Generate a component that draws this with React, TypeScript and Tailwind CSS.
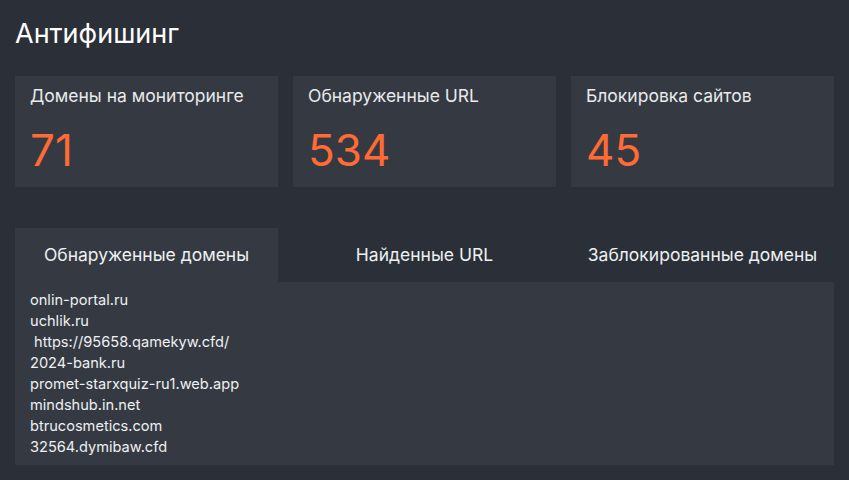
import { useState } from 'react';

const stats = [
  { label: 'Домены на мониторинге', value: '71' },
  { label: 'Обнаруженные URL', value: '534' },
  { label: 'Блокировка сайтов', value: '45' },
];

const tabs = ['Обнаруженные домены', 'Найденные URL', 'Заблокированные домены'];

const domains = [
  'onlin-portal.ru',
  'uchlik.ru',
  '\u00a0https://95658.qamekyw.cfd/',
  '2024-bank.ru',
  'promet-starxquiz-ru1.web.app',
  'mindshub.in.net',
  'btrucosmetics.com',
  '32564.dymibaw.cfd',
];

export default function App() {
  const [active, setActive] = useState(0);

  return (
    <div className="min-h-[480px] bg-[#2b3038] px-[15px] pt-[19px] pb-[15px] font-['Inter',sans-serif] text-[#eef0f2]">
      <h1 className="text-[27px] leading-[30px] font-normal text-white">Антифишинг</h1>

      <div className="mt-[27px] grid grid-cols-3 gap-[15px]">
        {stats.map((s) => (
          <div key={s.label} className="h-[111px] bg-[#353a42] px-[15px] pt-[9px]">
            <div className="text-[17.5px] leading-[22px] text-[#e8eaec]">{s.label}</div>
            <div className="mt-[19px] text-[44px] leading-[48px] text-[#ff6a35]">{s.value}</div>
          </div>
        ))}
      </div>

      <div className="mt-[41px]">
        <div className="grid grid-cols-3 gap-[15px]">
          {tabs.map((t, i) => (
            <button
              key={t}
              onClick={() => setActive(i)}
              className={`h-[54px] text-center text-[17.5px] ${i === active ? 'bg-[#353a42]' : 'bg-transparent'} text-[#eef0f2]`}
            >
              {t}
            </button>
          ))}
        </div>
        <div className="h-[183px] bg-[#353a42] px-[15px] pt-[8px]">
          {domains.map((d) => (
            <div key={d} className="text-[14.6px] leading-[21px] whitespace-pre text-[#eef0f2]">
              {d}
            </div>
          ))}
        </div>
      </div>
    </div>
  );
}
